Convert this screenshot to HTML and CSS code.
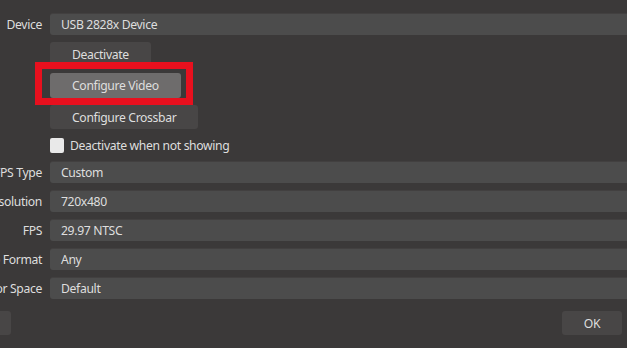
FILE: index.html
```html
<!DOCTYPE html>
<html lang="en">
<head>
  <meta charset="UTF-8">
  <title>Device Properties</title>
  <link rel="stylesheet" href="styles.css">
</head>
<body>
  <div class="form">
    <div class="row">
      <div class="lbl">Device</div>
      <div class="field">USB 2828x Device</div>
    </div>

    <div class="row">
      <div class="lbl"></div>
      <div class="btns">
        <button class="btn">Deactivate</button>
        <div class="mark">
          <button class="btn hover">Configure Video</button>
          <div class="redbox"></div>
        </div>
        <button class="btn">Configure Crossbar</button>
      </div>
    </div>

    <div class="row check-row">
      <div class="lbl"></div>
      <label class="check"><span class="box"></span>Deactivate when not showing</label>
    </div>

    <div class="row">
      <div class="lbl">FPS Type</div>
      <div class="field">Custom</div>
    </div>
    <div class="row">
      <div class="lbl">Resolution</div>
      <div class="field">720x480</div>
    </div>
    <div class="row">
      <div class="lbl">FPS</div>
      <div class="field">29.97 NTSC</div>
    </div>
    <div class="row">
      <div class="lbl">Video Format</div>
      <div class="field">Any</div>
    </div>
    <div class="row">
      <div class="lbl">Color Space</div>
      <div class="field">Default</div>
    </div>
  </div>

  <div class="footer">
    <button class="btn defaults">Defaults</button>
    <button class="btn ok">OK</button>
  </div>
</body>
</html>
```

FILE: styles.css
```css
html {
  background-color: #3b3939;
}

body {
  margin: 0;
  height: 348px;
  overflow: hidden;
  font-family: "Noto Sans", "Open Sans", sans-serif;
  font-size: 12.2px;
  letter-spacing: -0.35px;
  color: #dedede;
}

.form {
  padding-top: 13px;
  display: flex;
  flex-direction: column;
  gap: 7px;
}

.row {
  display: grid;
  grid-template-columns: 42px 1fr;
  column-gap: 8px;
  align-items: center;
}

.lbl {
  display: flex;
  justify-content: flex-end;
  white-space: nowrap;
}

.field {
  height: 22px;
  line-height: 22px;
  padding-left: 11px;
  margin-right: -12px;
  background-color: #4c4c4c;
  border-top: 1px solid #424040;
  box-sizing: border-box;
  border-radius: 3px;
}

.btns {
  display: flex;
  flex-direction: column;
  align-items: flex-start;
  gap: 7px;
}

.btn {
  height: 24px;
  padding: 0 22px;
  font: inherit;
  letter-spacing: inherit;
  color: #dedede;
  background-color: #484646;
  border: none;
  border-radius: 3px;
}

.btn.hover {
  background-color: #6e6c6c;
  height: 25px;
}

.mark {
  position: relative;
}

.redbox {
  position: absolute;
  left: -15px;
  top: -11px;
  width: 158px;
  height: 43px;
  box-sizing: border-box;
  border: 7px solid #e8101e;
}

.check-row {
  height: 18px;
}

.check {
  display: flex;
  align-items: center;
  gap: 6px;
}

.box {
  width: 14px;
  height: 15px;
  border-radius: 2px;
  background-color: #e9e9e9;
}

.footer {
  margin-top: 12px;
  display: flex;
  justify-content: space-between;
}

.defaults {
  margin-left: -69px;
  width: 80px;
}

.ok {
  width: 60px;
  margin-right: 5px;
  padding: 0;
}
```
